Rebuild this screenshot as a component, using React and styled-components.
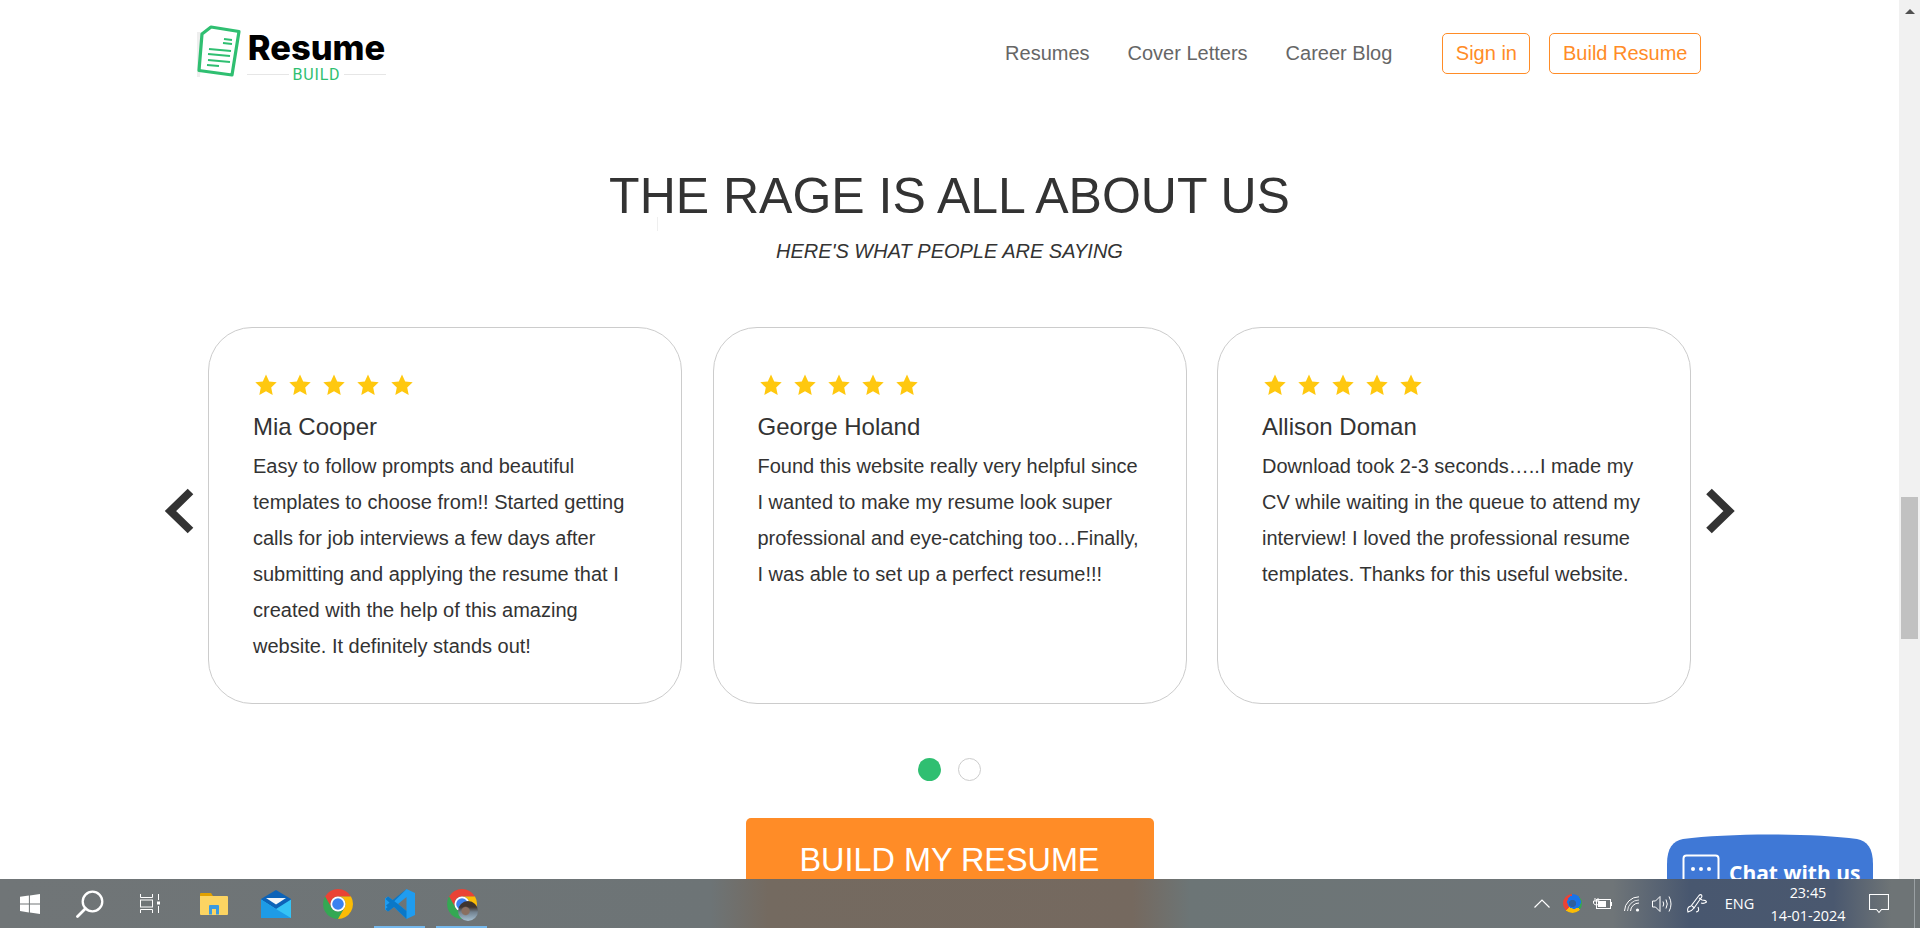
import React from 'react'
import styled, { createGlobalStyle } from 'styled-components'

const GlobalStyle = createGlobalStyle`
  html, body { margin: 0; padding: 0; height: 100%; overflow: hidden; background: #fff; }
  * { box-sizing: border-box; }
  body { font-family: "Liberation Sans", Arial, sans-serif; color: #333; }
`

const Screen = styled.div`
  position: relative;
  display: flex;
  width: 1920px;
  height: 928px;
  overflow: hidden;
`
const Page = styled.div`
  flex: 1;
  display: flex;
  flex-direction: column;
  align-items: center;
  background: #fff;
`
const ScrollTrack = styled.div`
  position: relative;
  width: 21px;
  padding: 497px 2px 0;
  background: #f1f1f1;
  &::before {
    content: "";
    position: absolute;
    left: 6px;
    top: 9px;
    border-left: 5px solid transparent;
    border-right: 5px solid transparent;
    border-bottom: 5px solid #505050;
  }
`
const ScrollThumb = styled.div`
  height: 142px;
  background: #c1c1c1;
`

const Header = styled.header`
  width: 1505px;
  height: 106px;
  display: flex;
  align-items: center;
  justify-content: space-between;
`
const Logo = styled.div`
  display: flex;
  align-items: flex-start;
  gap: 6px;
  height: 72px;
  padding-top: 8px;
`
const LogoWords = styled.div`
  display: flex;
  flex-direction: column;
  align-items: center;
  width: 139px;
  margin-top: 6px;
`
const LogoName = styled.div`
  font-family: Inter, Roboto, sans-serif;
  font-weight: 800;
  font-size: 34.5px;
  line-height: 34px;
  color: #000;
  white-space: nowrap;
`
const LogoSub = styled.div`
  display: flex;
  align-items: center;
  gap: 4px;
  width: 100%;
  margin-top: 1px;
  font-family: Roboto, sans-serif;
  font-size: 16px;
  line-height: 17px;
  letter-spacing: 0.8px;
  color: #2fbf71;
  &::before, &::after {
    content: "";
    flex: 1;
    height: 1px;
    background: #e6e6e6;
  }
`
const Nav = styled.nav`
  display: flex;
  align-items: center;
  padding-right: 1px;
`
const NavLink = styled.a`
  font-size: 20px;
  color: #666;
  margin-right: 38px;
`
const NavButton = styled.a`
  display: flex;
  align-items: center;
  height: 41px;
  padding: 0 12.5px;
  margin-left: ${p => p.$first ? '12px' : '19px'};
  font-size: 20px;
  color: #ff8c27;
  border: 1px solid #ff8c27;
  border-radius: 5px;
`

const Title = styled.h1`
  margin: 60px 0 0;
  font-size: 50px;
  line-height: 60px;
  font-weight: 400;
  color: #333;
`
const TextCursor = styled.span`
  position: absolute;
  left: 657px;
  top: 217px;
  width: 1px;
  height: 14px;
  background: #efefef;
`
const Subtitle = styled.p`
  margin: 13px 0 0;
  font-size: 20px;
  line-height: 24px;
  font-style: italic;
  color: #333;
`
const Carousel = styled.section`
  display: flex;
  align-items: center;
  gap: 13px;
  margin-top: 64px;
`
const Arrow = styled.svg`
  width: 31px;
  height: 48px;
  flex: none;
  margin-bottom: 10px;
`
const Cards = styled.div`
  display: flex;
  gap: 30.5px;
`
const Card = styled.article`
  width: 474px;
  height: 377px;
  padding: 46px 46px 0 44px;
  border: 1px solid #ccc;
  border-radius: 44px;
  background: #fff;
`
const Stars = styled.div`
  display: flex;
  gap: 12px;
  padding-left: 2px;
`
const Name = styled.h3`
  margin: 16px 0 0;
  font-size: 24px;
  line-height: 30px;
  font-weight: 400;
  color: #333;
`
const Quote = styled.p`
  margin: 6px 0 0;
  font-size: 20px;
  line-height: 36px;
  color: #333;
`
const Dots = styled.div`
  display: flex;
  gap: 17px;
  margin-top: 54px;
`
const Dot = styled.span`
  width: 23px;
  height: 23px;
  border-radius: 50%;
  background: ${p => p.$active ? '#2fbf71' : '#fff'};
  border: ${p => p.$active ? 'none' : '1px solid #ccc'};
`
const BuildButton = styled.a`
  display: flex;
  justify-content: center;
  width: 408px;
  height: 100px;
  margin-top: 37px;
  padding-top: 22px;
  background: #ff8c27;
  border-radius: 5px;
  font-size: 32.4px;
  line-height: 40px;
  color: #fff;
`

const ChatBubble = styled.div`
  position: absolute;
  left: 1667px;
  top: 834px;
  width: 206px;
  height: 90px;
  display: flex;
  align-items: flex-start;
  gap: 9px;
  padding: 20px 0 0 15px;
  background: #3f78d6;
  clip-path: path("M0 90 V30 C0 14 6 7 16 5 C60 -1 146 -1 190 5 C200 7 206 14 206 30 V90 Z");
`
const ChatText = styled.span`
  margin-top: 5px;
  font-family: "Open Sans", sans-serif;
  font-weight: 700;
  font-size: 21px;
  line-height: 28px;
  color: #fff;
  white-space: nowrap;
`
const ChatIcon = styled.svg`
  width: 38px;
  height: 36px;
  flex: none;
`

const Taskbar = styled.footer`
  position: absolute;
  left: 0;
  right: 0;
  bottom: 0;
  height: 49px;
  display: flex;
  align-items: stretch;
  background: linear-gradient(90deg, #707577 0%, #6d7476 37%, #746a60 40%, #75695f 59%, #6c7576 62%, #6f7578 84%, #48576f 88%, #4a586f 95.5%, #6e7476 98.5%);
`
const Slot = styled.div`
  position: relative;
  width: ${p => p.$w}px;
  flex: none;
  display: flex;
  align-items: center;
  justify-content: center;
`
const AppSlot = styled(Slot)`
  &::after {
    content: "";
    position: absolute;
    left: 5px;
    right: 6px;
    bottom: 0;
    height: 2px;
    background: ${p => p.$open ? '#76b9ed' : 'transparent'};
  }
`
const Spacer = styled.div`
  flex: 1;
`
const TrayText = styled.div`
  font-family: "Open Sans", sans-serif;
  font-size: ${p => p.$size || 14.4}px;
  line-height: 23px;
  color: #fff;
  text-align: center;
  white-space: nowrap;
`
const DesktopEdge = styled.div`
  width: 1px;
  margin: 0 5px 0 7px;
  background: #9aa0a3;
`
const Avatar = styled.span`
  position: absolute;
  left: 27px;
  top: 22px;
  width: 20px;
  height: 20px;
  border-radius: 50%;
  background:
    radial-gradient(circle at 38% 50%, #8a6f60 0 22%, transparent 30%),
    linear-gradient(180deg, #3f342f 0 30%, #71818f 55%, #a6c0d2 100%);
`
const ColorRing = styled.span`
  width: 19px;
  height: 19px;
  border-radius: 50%;
  background:
    radial-gradient(circle, #2d5f9e 0 26%, transparent 28%),
    radial-gradient(circle at 58% 42%, #1a73e8 0 42%, transparent 44%),
    conic-gradient(#1a73e8 0 12%, #34a853 12% 36%, #fbbc05 36% 62%, #ea4335 62% 100%);
`

const Star = () => (
  <svg width="22" height="22" viewBox="0 0 22 22">
    <polygon fill="#ffc80f" points="11,0.5 14.2,7.4 21.7,8.3 16.2,13.4 17.7,20.9 11,17.2 4.3,20.9 5.8,13.4 0.3,8.3 7.8,7.4" />
  </svg>
)

const Chevron = ({ left }) => (
  <Arrow viewBox="0 0 31 48">
    <polyline
      points={left ? '26.5,4.5 6.5,24 26.5,43.5' : '5,4.5 25,24 5,43.5'}
      fill="none"
      stroke="#333"
      strokeWidth="8"
      strokeLinejoin="miter"
    />
  </Arrow>
)

const LogoMark = () => (
  <svg width="44" height="52" viewBox="0 0 44 52">
    <polygon points="0,7 6,7 3,52 0,52" fill="#eeeeee" />
    <path d="M14 2 L42 6.5 L35 50 L2 45.5 L5 9 Z" fill="#fff" stroke="#2fbf71" strokeWidth="3.2" strokeLinejoin="round" />
    <path d="M27 14 L35 15 M26 18 L35 19 M12 24 L34 26 M11 29 L33 31 M11 35 L33 37 M10 40 L22 41" stroke="#2fbf71" strokeWidth="2.2" />
  </svg>
)

const WinLogo = () => (
  <svg width="20" height="20" viewBox="0 0 20 20" fill="#fff">
    <polygon points="0,2.8 8.9,1.5 8.9,9.4 0,9.4" />
    <polygon points="9.9,1.4 20,0 20,9.4 9.9,9.4" />
    <polygon points="0,10.4 8.9,10.4 8.9,18.4 0,17.1" />
    <polygon points="9.9,10.4 20,10.4 20,20 9.9,18.5" />
  </svg>
)
const SearchIcon = () => (
  <svg width="28" height="28" viewBox="0 0 28 28" fill="none" stroke="#fff">
    <circle cx="16.5" cy="11.5" r="9.8" strokeWidth="2.3" />
    <line x1="9.5" y1="18.5" x2="1.5" y2="26.5" strokeWidth="2.8" strokeLinecap="round" />
  </svg>
)
const TaskViewIcon = () => (
  <svg width="20" height="19" viewBox="0 0 20 19" fill="none" stroke="#fff" strokeWidth="1">
    <path d="M0.5 0 V3.5 H12.5 V0 M0.5 19 V15.5 H12.5 V19" />
    <rect x="0.5" y="6" width="12" height="7" />
    <path d="M18.5 0 V6 M18.5 12 V19" />
    <rect x="17" y="7.5" width="3" height="3" fill="#fff" stroke="none" />
  </svg>
)
const FolderIcon = () => (
  <svg width="28" height="22" viewBox="0 0 28 22">
    <path d="M0 1 Q0 0 1 0 H11 L13 3 V6 H0 Z" fill="#e0a000" />
    <path d="M0 3 H27 Q28 3 28 4 V21 Q28 22 27 22 H1 Q0 22 0 21 Z" fill="#fcd462" />
    <path d="M9 21.5 V13 Q9 12 10 12 H18 Q19 12 19 13 V21.5 H16 V16 H12 V21.5 Z" fill="#3a9ae0" />
  </svg>
)
const MailIcon = () => (
  <svg width="30" height="28" viewBox="0 0 30 28">
    <polygon points="15,0 30,9 30,12 15,20 0,12 0,9" fill="#0d63b8" />
    <polygon points="5,8 25,8 15,14.5" fill="#f4f6f8" />
    <path d="M0 9.5 L15 19 L30 9.5 V28 H0 Z" fill="#35c3f5" />
    <path d="M0 28 V9.5 L15 19 L30 28 Z" fill="#1e9be6" />
  </svg>
)
const ChromeIcon = () => (
  <svg width="30" height="30" viewBox="2 2 44 44">
    <path d="M5 13 A22 22 0 0 1 43.05 13 H24 A11 11 0 0 0 14.47 29.5 Z" fill="#ea4335" />
    <path d="M5 13 A22 22 0 0 0 24 46 L33.53 29.5 A11 11 0 0 1 14.47 29.5 Z" fill="#34a853" />
    <path d="M43.05 13 H24 A11 11 0 0 1 33.53 29.5 L24 46 A22 22 0 0 0 43.05 13 Z" fill="#fbbc05" />
    <circle cx="24" cy="24" r="11" fill="#fff" />
    <circle cx="24" cy="24" r="8.5" fill="#3b82f0" />
  </svg>
)
const CodeIcon = () => (
  <svg width="30" height="30" viewBox="0 0 30 30">
    <path d="M21.5 0 L30 4 V26 L21.5 30 L9 18 L3 22.5 L0 20.5 V9.5 L3 7.5 L9 12 Z M21.5 8 L13 15 L21.5 22 Z" fill="#1f9cf0" fillRule="evenodd" />
    <path d="M21.5 0 L3 18.5 L1 16.5 L21.5 0 M21.5 30 L9 18 L3 22.5 L0.5 20 L6 15 L0.5 10 L3 7.5 L9 12 L13 15 L21.5 22 V30 Z" fill="#0a78c8" />
  </svg>
)
const CaretIcon = () => (
  <svg width="16" height="9" viewBox="0 0 16 9" fill="none" stroke="#fff" strokeWidth="1.2">
    <polyline points="0.5,8.5 8,1 15.5,8.5" />
  </svg>
)
const BatteryIcon = () => (
  <svg width="20" height="13" viewBox="0 0 20 13" fill="none" stroke="#fff">
    <path d="M3 1 V4 M6 1 V4 M1.5 4 H7.5 V6 Q7 8 4.5 8 Q2 8 1.5 6 Z M4.5 8 V10" strokeWidth="1" />
    <rect x="4.5" y="2.5" width="14" height="9" strokeWidth="1" />
    <rect x="6" y="4" width="8" height="6" fill="#fff" stroke="none" />
    <rect x="19" y="5" width="1" height="4" fill="#fff" stroke="none" />
  </svg>
)
const WifiIcon = () => (
  <svg width="16" height="16" viewBox="0 0 16 16" fill="none" stroke="#fff" strokeWidth="1">
    <path d="M0.5 15 A14.5 14.5 0 0 1 15 0.8" />
    <path d="M3.5 15 A11.5 11.5 0 0 1 15 4" opacity="0.8" />
    <path d="M6.5 15 A8.5 8.5 0 0 1 15 7" />
    <circle cx="13.5" cy="14" r="1.6" fill="#fff" stroke="none" />
  </svg>
)
const VolumeIcon = () => (
  <svg width="20" height="18" viewBox="0 0 20 18" fill="none" stroke="#fff" strokeWidth="1">
    <path d="M0.5 6 H3.5 L8 1.5 V16.5 L3.5 12 H0.5 Z" />
    <path d="M11 6.5 Q12.5 9 11 11.5 M14 4.5 Q16.5 9 14 13.5 M17 1.5 Q21 9 17 16.5" />
  </svg>
)
const PenIcon = () => (
  <svg width="20" height="19" viewBox="0 0 20 19" fill="none" stroke="#fff" strokeWidth="1.1">
    <path d="M1 18 Q-0.5 13 4 12 L12 1.5 Q13.5 0 14.5 1 Q15.5 2.5 14 4 L7 14 Q5 17 1 18 Z" />
    <path d="M12 4 L15 6 Q19 6 19.5 8 Q17 10 14 9 M5 12 L7.5 14" />
    <path d="M9 18 Q13 17.5 11 13" />
  </svg>
)
const BellIcon = () => (
  <svg width="20" height="20" viewBox="0 0 20 20" fill="none" stroke="#fff" strokeWidth="1.1">
    <path d="M0.5 0.5 H19.5 V15.5 H12.5 L10 18.5 L7.5 15.5 H0.5 Z" />
  </svg>
)

const reviews = [
  { name: 'Mia Cooper', text: 'Easy to follow prompts and beautiful templates to choose from!! Started getting calls for job interviews a few days after submitting and applying the resume that I created with the help of this amazing website. It definitely stands out!' },
  { name: 'George Holand', text: 'Found this website really very helpful since I wanted to make my resume look super professional and eye-catching too…Finally, I was able to set up a perfect resume!!!' },
  { name: 'Allison Doman', text: 'Download took 2-3 seconds…..I made my CV while waiting in the queue to attend my interview! I loved the professional resume templates. Thanks for this useful website.' },
]

const App = () => {
  return (
    <Screen>
      <GlobalStyle />
      <Page>
        <Header>
          <Logo>
            <LogoMark />
            <LogoWords>
              <LogoName>Resume</LogoName>
              <LogoSub>BUILD</LogoSub>
            </LogoWords>
          </Logo>
          <Nav>
            <NavLink>Resumes</NavLink>
            <NavLink>Cover Letters</NavLink>
            <NavLink>Career Blog</NavLink>
            <NavButton $first>Sign in</NavButton>
            <NavButton>Build Resume</NavButton>
          </Nav>
        </Header>
        <Title>THE RAGE IS ALL ABOUT US</Title>
        <TextCursor />
        <Subtitle>HERE'S WHAT PEOPLE ARE SAYING</Subtitle>
        <Carousel>
          <Chevron left />
          <Cards>
            {reviews.map(r => (
              <Card key={r.name}>
                <Stars>
                  {[0, 1, 2, 3, 4].map(i => <Star key={i} />)}
                </Stars>
                <Name>{r.name}</Name>
                <Quote>{r.text}</Quote>
              </Card>
            ))}
          </Cards>
          <Chevron />
        </Carousel>
        <Dots>
          <Dot $active />
          <Dot />
        </Dots>
        <BuildButton>BUILD MY RESUME</BuildButton>
      </Page>
      <ScrollTrack>
        <ScrollThumb />
      </ScrollTrack>
      <ChatBubble>
        <ChatIcon viewBox="0 0 38 36">
          <rect x="1.5" y="1.5" width="35" height="33" rx="3" fill="none" stroke="#fff" strokeWidth="2" />
          <circle cx="11" cy="15" r="2" fill="#fff" />
          <circle cx="19" cy="15" r="2" fill="#fff" />
          <circle cx="27" cy="15" r="2" fill="#fff" />
        </ChatIcon>
        <ChatText>Chat with us</ChatText>
      </ChatBubble>
      <Taskbar>
        <Slot $w={60}><WinLogo /></Slot>
        <Slot $w={60}><SearchIcon /></Slot>
        <Slot $w={60}><TaskViewIcon /></Slot>
        <Slot $w={3} />
        <AppSlot $w={62}><FolderIcon /></AppSlot>
        <AppSlot $w={62}><MailIcon /></AppSlot>
        <AppSlot $w={62}><ChromeIcon /></AppSlot>
        <AppSlot $w={62} $open><CodeIcon /></AppSlot>
        <AppSlot $w={62} $open><ChromeIcon /><Avatar /></AppSlot>
        <Spacer />
        <Slot $w={30}><CaretIcon /></Slot>
        <Slot $w={30}><ColorRing /></Slot>
        <Slot $w={30}><BatteryIcon /></Slot>
        <Slot $w={30}><WifiIcon /></Slot>
        <Slot $w={30}><VolumeIcon /></Slot>
        <Slot $w={5} />
        <Slot $w={30}><PenIcon /></Slot>
        <Slot $w={2} />
        <Slot $w={51}><TrayText $size={14.5}>ENG</TrayText></Slot>
        <Slot $w={86}>
          <TrayText>23:45<br />14-01-2024</TrayText>
        </Slot>
        <Slot $w={56}><BellIcon /></Slot>
        <DesktopEdge />
      </Taskbar>
    </Screen>
  )
}

export default App
